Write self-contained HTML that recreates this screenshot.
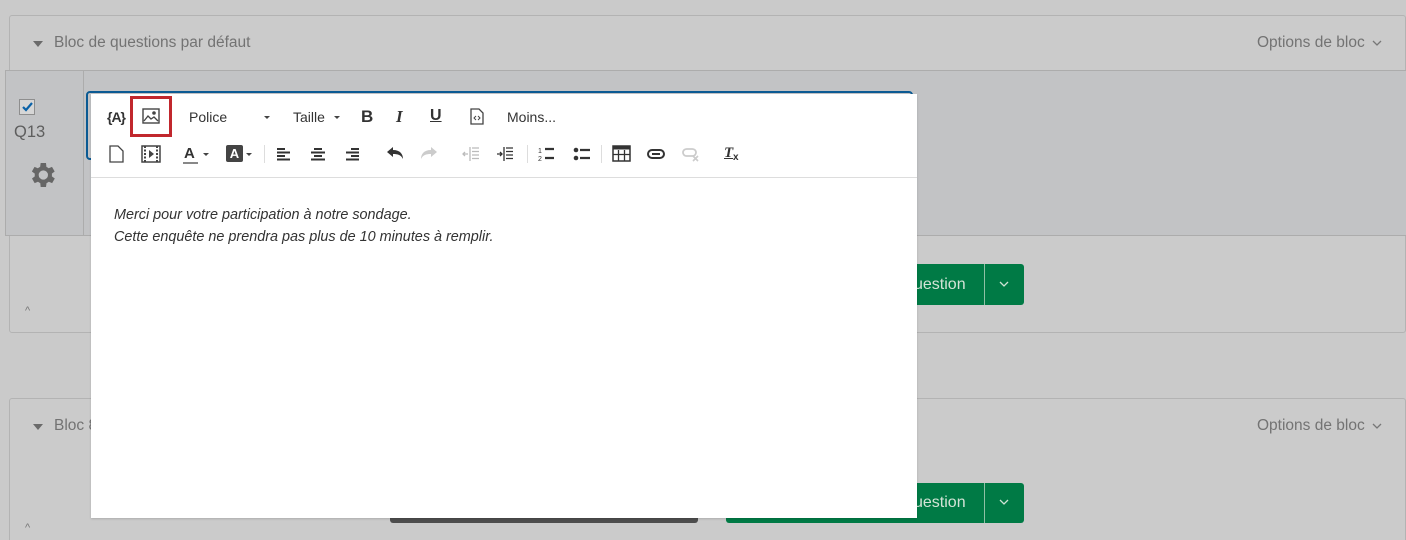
<!DOCTYPE html>
<html style="width:1406px;height:540px;overflow:hidden"><head><meta charset="utf-8"><style>
*{margin:0;padding:0;box-sizing:border-box}
body{width:1406px;height:540px;overflow:hidden;background:#cacaca;font-family:"Liberation Sans",sans-serif;position:relative}
.a{position:absolute}
.blk{position:absolute;left:9px;right:0;border:1px solid #b3b3b3;border-radius:3px;background:#cbcbcb}
.ht{color:#737373;font-size:15.5px}
.tri{width:0;height:0;border-left:5px solid transparent;border-right:5px solid transparent;border-top:6px solid #6a6a6a}
.green{background:#007a45;border-radius:3px;color:#c8dccd;font-size:16px}
.tb{position:absolute;color:#333;font-size:14px}
.ic{position:absolute}
</style></head><body>
<div class="blk" style="top:15px;height:318px"></div>
<div class="a" style="left:10px;top:70px;right:0;height:1px;background:#b3b3b3"></div>
<div class="a tri" style="left:33px;top:41px"></div>
<div class="a ht" style="left:54px;top:34px">Bloc de questions par défaut</div>
<div class="a ht" style="left:1257px;top:34px">Options de bloc</div>
<svg class="a" style="left:1372px;top:40px" width="10" height="7"><path d="M1 1l4 4 4-4" stroke="#777" fill="none" stroke-width="1.3"/></svg>
<div class="a" style="left:5px;top:70px;right:0;height:166px;background:#c2c3c5;border:1px solid #acacac;border-right:none"></div>
<div class="a" style="left:83px;top:71px;width:1px;height:165px;background:#acacac"></div>
<div class="a" style="left:19px;top:99px;width:16px;height:16px;border:1px solid #8e8e8e;background:#d6d6d6"></div>
<svg class="a" style="left:20px;top:100px" width="14" height="14"><path d="M3 7l3 3 6-7" stroke="#0a62a8" stroke-width="2.2" fill="none"/></svg>
<div class="a" style="left:14px;top:123px;color:#5e5e5e;font-size:16.5px">Q13</div>
<svg class="a" style="left:26px;top:159px" width="32" height="32" viewBox="0 0 24 24"><path fill="#666" d="M19.4 13a7.5 7.5 0 000-2l2.1-1.6-2-3.5-2.5 1a7 7 0 00-1.7-1L15 3h-4l-.4 2.9a7 7 0 00-1.7 1l-2.5-1-2 3.5L6.6 11a7.5 7.5 0 000 2l-2.1 1.6 2 3.5 2.5-1a7 7 0 001.7 1L11 21h4l.4-2.9a7 7 0 001.7-1l2.5 1 2-3.5zM13 15.5a3.5 3.5 0 110-7 3.5 3.5 0 010 7z"/></svg>
<div class="a" style="left:86px;top:91px;width:827px;height:69px;border:2px solid #0b5a93;border-radius:4px"></div>
<div class="a green" style="left:726px;top:264px;width:298px;height:41px"></div>
<div class="a" style="left:984px;top:264px;width:1px;height:41px;background:#8fc0a5"></div>
<div class="a" style="left:914px;top:276px;color:#d3e3d6;font-size:16px">uestion</div>
<svg class="a" style="left:999px;top:281px" width="10" height="7"><path d="M1 1l4 4 4-4" stroke="#cfe3d5" fill="none" stroke-width="1.3"/></svg>
<div class="a" style="left:25px;top:305px;color:#777;font-size:11px">^</div>
<div class="blk" style="top:398px;height:160px"></div>
<div class="a tri" style="left:33px;top:424px"></div>
<div class="a ht" style="left:54px;top:417px">Bloc 8</div>
<div class="a ht" style="left:1257px;top:417px">Options de bloc</div>
<svg class="a" style="left:1372px;top:423px" width="10" height="7"><path d="M1 1l4 4 4-4" stroke="#777" fill="none" stroke-width="1.3"/></svg>
<div class="a" style="left:390px;top:500px;width:308px;height:23px;background:#4d4d4d;border-radius:3px"></div>
<div class="a green" style="left:726px;top:483px;width:298px;height:40px"></div>
<div class="a" style="left:984px;top:483px;width:1px;height:40px;background:#8fc0a5"></div>
<div class="a" style="left:914px;top:494px;color:#d3e3d6;font-size:16px">uestion</div>
<svg class="a" style="left:999px;top:499px" width="10" height="7"><path d="M1 1l4 4 4-4" stroke="#cfe3d5" fill="none" stroke-width="1.3"/></svg>
<div class="a" style="left:25px;top:522px;color:#777;font-size:11px">^</div>
<div class="a" style="left:91px;top:94px;width:826px;height:424px;background:#fff;box-shadow:0 1px 2px rgba(0,0,0,.15)"></div>
<div class="a" style="left:91px;top:177px;width:826px;height:1px;background:#ddd"></div>
<div class="tb" style="left:107px;top:109px;font-weight:bold;font-size:14px;letter-spacing:-1px">{A}</div>
<div class="a" style="left:130px;top:96px;width:42px;height:41px;border:3px solid #c1272d"></div>
<svg class="ic" style="left:142px;top:108px" width="18" height="16" viewBox="0 0 18 16"><rect x="1" y="1" width="16" height="14" fill="none" stroke="#444" stroke-width="1.4"/><path d="M2 13l4-5 3 3 3-2 4 4" fill="none" stroke="#444" stroke-width="1.3"/><circle cx="12" cy="5" r="1.8" fill="#444"/></svg>
<div class="tb" style="left:189px;top:109px">Police</div>
<div class="a tri" style="left:264px;top:116px;border-width:3px 3px 0;border-top-color:#444"></div>
<div class="tb" style="left:293px;top:109px">Taille</div>
<div class="a tri" style="left:334px;top:116px;border-width:3px 3px 0;border-top-color:#444"></div>
<div class="tb" style="left:361px;top:107px;font-weight:bold;font-size:17px">B</div>
<div class="tb" style="left:396px;top:107px;font-weight:bold;font-style:italic;font-size:17px;font-family:'Liberation Serif',serif">I</div>
<div class="tb" style="left:430px;top:107px;font-weight:bold;font-size:16px;text-decoration:underline">U</div>
<svg class="ic" style="left:470px;top:108px" width="14" height="17"><path d="M1 1h8l4 4v11H1z" fill="none" stroke="#444" stroke-width="1.3"/><path d="M6 8l-2 2 2 2M8 8l2 2-2 2" stroke="#444" fill="none"/></svg>
<div class="tb" style="left:507px;top:109px">Moins...</div>
<svg class="ic" style="left:109px;top:145px" width="15" height="18"><path d="M1 1h8l5 5v11H1z" fill="none" stroke="#444" stroke-width="1.3"/></svg>
<svg class="ic" style="left:141px;top:145px" width="20" height="18"><rect x="1" y="1" width="18" height="16" fill="none" stroke="#444" stroke-width="1.5"/><path d="M4 1v16M16 1v16" stroke="#444" stroke-dasharray="2 1.5" stroke-width="2"/><path d="M8 5l5 4-5 4z" fill="#444"/></svg>
<div class="tb" style="left:184px;top:145px;font-weight:bold;font-size:15px">A</div>
<div class="a" style="left:183px;top:162px;width:15px;height:2px;background:#888"></div>
<div class="a tri" style="left:203px;top:153px;border-width:3px 3px 0;border-top-color:#444"></div>
<div class="a" style="left:226px;top:145px;width:17px;height:17px;background:#444;border-radius:2px;color:#fff;font-weight:bold;font-size:13px;text-align:center;line-height:17px">A</div>
<div class="a tri" style="left:246px;top:153px;border-width:3px 3px 0;border-top-color:#444"></div>
<div class="a" style="left:264px;top:145px;width:1px;height:18px;background:#ddd"></div>
<svg class="ic" style="left:276px;top:147px" width="16" height="14"><path d="M1 2h8M1 5.5h13M1 9h8M1 12.5h13" stroke="#333" stroke-width="2"/></svg>
<svg class="ic" style="left:310px;top:147px" width="16" height="14"><path d="M4 2h8M1 5.5h14M4 9h8M1 12.5h14" stroke="#333" stroke-width="2"/></svg>
<svg class="ic" style="left:344px;top:147px" width="16" height="14"><path d="M7 2h8M2 5.5h13M7 9h8M2 12.5h13" stroke="#333" stroke-width="2"/></svg>
<svg class="ic" style="left:386px;top:146px" width="18" height="14"><path d="M7 1L1 6l6 5V8c5 0 8 1 10 5 0-5-3-9-10-9z" fill="#333"/></svg>
<svg class="ic" style="left:420px;top:146px" width="18" height="14"><path d="M11 1l6 5-6 5V8C6 8 3 9 1 13c0-5 3-9 10-9z" fill="#ccc"/></svg>
<svg class="ic" style="left:462px;top:146px" width="18" height="16"><path d="M8 1v14M10 2h7M10 5.5h7M10 9h7M10 12.5h7M1 8h5M3 6l-2 2 2 2" stroke="#bbb" fill="none" stroke-width="1.3"/></svg>
<svg class="ic" style="left:496px;top:146px" width="18" height="16"><path d="M8 1v14M10 2h7M10 5.5h7M10 9h7M10 12.5h7M1 8h5M4 6l2 2-2 2" stroke="#333" fill="none" stroke-width="1.3"/></svg>
<div class="a" style="left:527px;top:145px;width:1px;height:18px;background:#ddd"></div>
<svg class="ic" style="left:538px;top:146px" width="16" height="16"><path d="M7 3h9M7 12h9" stroke="#333" stroke-width="2.2"/><text x="0" y="7" font-size="7" fill="#333" font-family="Liberation Sans">1</text><text x="0" y="15" font-size="7" fill="#333" font-family="Liberation Sans">2</text></svg>
<svg class="ic" style="left:573px;top:146px" width="17" height="16"><circle cx="3" cy="4" r="2.3" fill="#333"/><circle cx="3" cy="12" r="2.3" fill="#333"/><path d="M7 4h10M7 12h10" stroke="#333" stroke-width="2.2"/></svg>
<div class="a" style="left:601px;top:145px;width:1px;height:18px;background:#ddd"></div>
<svg class="ic" style="left:612px;top:145px" width="19" height="17"><rect x="1" y="1" width="17" height="15" fill="none" stroke="#333" stroke-width="1.5"/><path d="M1 3h17" stroke="#333" stroke-width="3"/><path d="M1 9.5h17M6.5 5v11M12.5 5v11" stroke="#333" stroke-width="1.3"/></svg>
<svg class="ic" style="left:647px;top:149px" width="18" height="10"><rect x="1" y="1" width="16" height="8" rx="4" fill="none" stroke="#333" stroke-width="2"/><path d="M5 5h8" stroke="#333" stroke-width="2"/></svg>
<svg class="ic" style="left:682px;top:148px" width="18" height="14"><rect x="1" y="1" width="13" height="7" rx="3.5" fill="none" stroke="#ccc" stroke-width="1.8"/><path d="M11 8l5 5M16 8l-5 5" stroke="#ccc" stroke-width="1.6"/></svg>
<div class="tb" style="left:724px;top:145px;font-weight:bold;font-style:italic;font-size:15px;font-family:'Liberation Serif',serif;text-decoration:underline">T</div>
<div class="tb" style="left:733px;top:152px;font-weight:bold;font-size:10px">x</div>
<div class="a" style="left:114px;top:204px;font-style:italic;font-size:14.4px;color:#333;line-height:22px">Merci pour votre participation à notre sondage.<br>Cette enquête ne prendra pas plus de 10 minutes à remplir.</div>
</body></html>
